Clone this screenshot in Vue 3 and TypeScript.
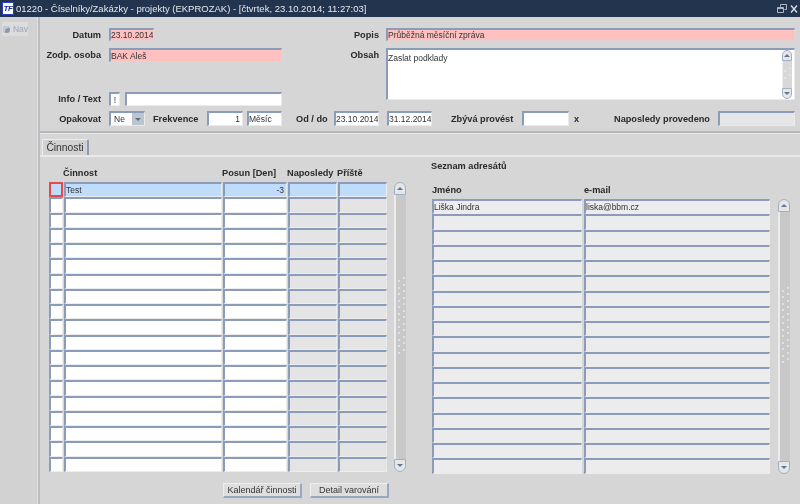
<script setup lang="ts">
const rowsLeft: { name: string; shift: string }[] = Array.from({ length: 19 }, (_, i) =>
  i === 0 ? { name: 'Test', shift: '-3' } : { name: '', shift: '' }
)
const rowsRight: { name: string; mail: string }[] = Array.from({ length: 18 }, (_, i) =>
  i === 0 ? { name: 'Liška Jindra', mail: 'liska@bbm.cz' } : { name: '', mail: '' }
)
const grip: number[] = Array.from({ length: 24 }, (_, i) => i)
const miniGrip: number[] = Array.from({ length: 4 }, (_, i) => i)
</script>

<template>
  <div class="app">
    <header class="titlebar">
      <span class="logo">TF</span>
      <span class="title">01220 - Číselníky/Zakázky - projekty (EKPROZAK) - [čtvrtek, 23.10.2014; 11:27:03]</span>
      <svg class="winbtns" width="24" height="12" viewBox="0 0 24 12" fill="none" stroke="#aeb8c6" stroke-width="1">
        <path d="M4.5 3.5V1.5H10.5V6.5H8.5" />
        <path d="M1.5 4.5H7.5V9.5H1.5Z" />
        <path d="M1.5 5.5H7.5" />
        <path d="M15 2.5L21 9.5M21 2.5L15 9.5" stroke="#d4dae2" stroke-width="1.4" />
      </svg>
    </header>
    <div class="main">
      <aside class="nav">
        <div class="navtab"><span class="navdot"></span><span>Nav</span></div>
      </aside>
      <div class="content">
        <section class="form">
          <div class="upper">
            <div class="ucol-left">
              <div class="frow r1"><label class="lab">Datum</label><div class="inp pink w45">23.10.2014</div></div>
              <div class="frow r2"><label class="lab">Zodp. osoba</label><div class="inp pink w173">BAK Aleš</div></div>
              <div class="frow r3">
                <label class="lab">Info / Text</label>
                <div class="inp w11 center">!</div>
                <div class="inp w157"></div>
              </div>
            </div>
            <div class="ucol-right">
              <div class="frow r1"><label class="lab rlab">Popis</label><div class="inp pink grow">Průběžná měsíční zpráva</div></div>
              <div class="frow r2 obsah">
                <label class="lab rlab">Obsah</label>
                <div class="inp area grow">
                  <span>Zaslat podklady</span>
                  <div class="sb mini">
                    <span class="sbtn up"></span>
                    <span class="track">
                      <span class="grip minigrip"><i v-for="g in miniGrip" :key="g"></i></span>
                    </span>
                    <span class="sbtn down"></span>
                  </div>
                </div>
              </div>
            </div>
          </div>
          <div class="frow r4">
            <label class="lab">Opakovat</label>
            <div class="inp select"><span>Ne</span><i class="caret"><b></b></i></div>
            <label class="blab l-frek">Frekvence</label>
            <div class="inp w36 right">1</div>
            <div class="inp w35 mes">Měsíc</div>
            <label class="blab l-od">Od / do</label>
            <div class="inp w45">23.10.2014</div>
            <div class="inp w45 m8">31.12.2014</div>
            <label class="blab l-zb">Zbývá provést</label>
            <div class="inp w47"></div>
            <label class="blab l-x">x</label>
            <label class="blab l-nap">Naposledy provedeno</label>
            <div class="inp dis w77"></div>
          </div>
        </section>
        <div class="tabs"><div class="tab">Činnosti</div></div>
        <section class="tabbody">
          <div class="tables">
            <div class="left">
              <div class="thead lhead">
                <span class="c-name">Činnost</span>
                <span class="c-shift">Posun [Den]</span>
                <span class="c-last">Naposledy</span>
                <span class="c-next">Příště</span>
              </div>
              <div class="tblwrap">
                <div class="rows">
                  <div v-for="(r, i) in rowsLeft" :key="i" class="row" :class="{ cur: i === 0 }">
                    <div class="cell sel" :class="{ focus: i === 0 }"></div>
                    <div class="cell nm">{{ r.name }}</div>
                    <div class="cell sh">{{ r.shift }}</div>
                    <div class="cell ro la"></div>
                    <div class="cell ro ne"></div>
                  </div>
                </div>
                <div class="sb">
                  <span class="sbtn up"></span>
                  <span class="track">
                    <span class="grip"><i v-for="g in grip" :key="g"></i></span>
                  </span>
                  <span class="sbtn down"></span>
                </div>
              </div>
              <div class="btns">
                <button class="btn">Kalendář činnosti</button>
                <button class="btn">Detail varování</button>
              </div>
            </div>
            <div class="rightp">
              <div class="seznam">Seznam adresátů</div>
              <div class="thead rhead">
                <span class="c-jm">Jméno</span>
                <span>e-mail</span>
              </div>
              <div class="tblwrap rw">
                <div class="rows">
                  <div v-for="(r, i) in rowsRight" :key="i" class="row">
                    <div class="cell gr jm">{{ r.name }}</div>
                    <div class="cell gr em">{{ r.mail }}</div>
                  </div>
                </div>
                <div class="sb">
                  <span class="sbtn up"></span>
                  <span class="track">
                    <span class="grip"><i v-for="g in grip" :key="g"></i></span>
                  </span>
                  <span class="sbtn down"></span>
                </div>
              </div>
            </div>
          </div>
        </section>
      </div>
    </div>
  </div>
</template>

<style>
html, body { margin: 0; padding: 0; background: #d6d6d6; }
</style>

<style scoped>
.app {
  width: 800px; height: 504px; overflow: hidden; display: flex; flex-direction: column;
  background: #d6d6d6; font-family: "Liberation Sans", Arial, sans-serif; font-size: 8.5px; color: #222;
  filter: blur(0.45px);
}
.titlebar {
  height: 17px; flex: none; background: #22344e; color: #e6e9ee; display: flex; align-items: center;
  font-size: 9.5px; padding-left: 2px;
}
.logo {
  width: 10px; height: 11px; background: #fff; border: 1px solid #2a3fc0; color: #1a2ca8; font: italic bold 8px/11px "Liberation Sans", sans-serif;
  text-align: center; margin-right: 2px; letter-spacing: -0.5px;
}
.title { white-space: nowrap; }
.winbtns { margin-left: auto; }
.main { flex: 1; display: flex; min-height: 0; }
.nav {
  width: 38px; flex: none; background: #d2d2d2; border-right: 2px solid #b9bcc0; box-sizing: content-box;
  padding-top: 5px; box-shadow: inset -1px 0 0 #e2e2e2;
}
.navtab {
  margin-left: 2px; width: 26px; height: 14px; background: #dcdcdc; display: flex; align-items: center; gap: 3px;
  color: #9aa7ba; font-size: 8.5px;
}
.navdot { width: 7px; height: 7px; border-radius: 50%; background: #8a98a8; margin-left: 1px; box-shadow: inset 2px 2px 0 #c4ccd4; }
.content { flex: 1; min-width: 0; display: flex; flex-direction: column; }
.form { height: 114px; flex: none; border-bottom: 2px solid #b6b8bb; box-sizing: content-box; box-shadow: 0 1px 0 #e6e6e6; }
.upper { display: flex; padding-top: 11px; height: 83px; box-sizing: content-box; }
.ucol-left { width: 242px; flex: none; display: flex; flex-direction: column; }
.ucol-right { width: 510px; flex: none; margin-left: 3px; display: flex; flex-direction: column; }
.frow { display: flex; align-items: center; }
.lab {
  width: 61px; margin-right: 8px; flex: none; text-align: right; font-weight: bold; font-size: 9.2px; white-space: nowrap; color: #2a2a2a;
}
.rlab { width: 94px; margin-right: 7px; }
.r1 { height: 13px; margin-bottom: 7px; }
.r2 { height: 14px; margin-bottom: 30px; }
.obsah { height: 52px; margin-bottom: 0; align-items: flex-start; }
.obsah .lab { margin-top: 2px; }
.r3 { height: 14px; }
.r4 { height: 15px; }
.inp {
  box-sizing: border-box; height: 100%; background: #fff; border: 1px solid #eaeaea; border-top: 2px solid #8a9cba; border-left: 2px solid #8a9cba;
  padding: 0 1px 0 0; white-space: nowrap; overflow: hidden; line-height: 10px; display: flex; align-items: center; color: #333;
}
.pink { background: #ffc0c0; border-right-color: #e2d2d2; border-bottom-color: #e2d2d2; }
.dis { background: #e6e6e6; }
.grow { flex: 1; min-width: 0; }
.w45 { width: 45px; flex: none; }
.w173 { width: 173px; flex: none; }
.w11 { width: 11px; flex: none; }
.w157 { width: 157px; flex: none; margin-left: 5px; }
.w36 { width: 36px; flex: none; }
.w35 { width: 35px; flex: none; }
.w47 { width: 47px; flex: none; }
.w77 { width: 77px; flex: none; }
.m8 { margin-left: 8px; }
.center { justify-content: center; padding: 0; }
.right { justify-content: flex-end; padding-right: 2px; }
.mes { margin-left: 4px; }
.area { position: relative; align-items: flex-start; padding-top: 3px; height: 52px; }
.select { width: 36px; flex: none; padding: 0 0 0 3px; justify-content: space-between; }
.caret { width: 12px; height: 100%; background: #bcc4cc; display: flex; align-items: center; justify-content: center; }
.caret b { width: 0; height: 0; border: 3px solid transparent; border-top: 3px solid #5a6e8c; border-bottom: 0; }
.blab { font-weight: bold; font-size: 9.2px; white-space: nowrap; flex: none; color: #2a2a2a; }
.l-frek { margin-left: 8px; width: 54px; }
.l-od { margin-left: 14px; width: 38px; }
.l-zb { margin-left: 19px; width: 71px; }
.l-x { margin-left: 5px; width: 40px; }
.l-nap { width: 104px; }
.tabs { height: 16px; flex: none; margin-top: 6px; display: flex; align-items: flex-end; border-bottom: 2px solid #e9e9e9; box-sizing: content-box; }
.tab {
  margin-left: 2px; width: 47px; height: 16px; box-sizing: border-box; background: #d2d2d2; border-top: 1px solid #ececec; border-left: 1px solid #ececec;
  border-right: 2px solid #8b9cb6; display: flex; align-items: center; justify-content: center; font-size: 10.3px; color: #333;
  border-radius: 2px 2px 0 0;
}
.tabbody { flex: 1; min-height: 0; }
.tables { display: flex; padding-left: 9px; }
.left { width: 358px; flex: none; padding-top: 9px; }
.thead {
  font-weight: bold; font-size: 9.2px; height: 13px; margin-bottom: 3px; display: flex; align-items: center; color: #2a2a2a; white-space: nowrap;
}
.c-name { margin-left: 14px; width: 159px; }
.c-shift { width: 65px; }
.c-last { width: 50px; }
.tblwrap { display: flex; }
.row { display: flex; height: 15.25px; box-sizing: border-box; }
.cell {
  box-sizing: border-box; height: 100%; background: #fff; border: 1px solid #ececec; border-top: 2px solid #8a9cba; border-left: 2px solid #8a9cba;
  display: flex; align-items: center; overflow: hidden; white-space: nowrap; color: #333;
}
.sel { width: 14px; margin-right: 1px; }
.nm { width: 158px; margin-right: 1px; }
.sh { width: 64px; margin-right: 1px; justify-content: flex-end; padding-right: 2px; }
.ro { background: #e4e4e4; }
.la { width: 49px; margin-right: 1px; }
.ne { width: 49px; }
.cur .cell { background: #bfdcfb; }
.focus { border: 2px solid #e5484d !important; }
.sb { width: 12px; margin-left: 7px; display: flex; flex-direction: column; flex: none; }
.sbtn {
  height: 13px; flex: none; box-sizing: border-box; border: 1px solid #a2b0c6; background: #e6e6e6; display: flex; align-items: center; justify-content: center;
}
.sbtn::after { content: ""; width: 0; height: 0; border: 3px solid transparent; }
.up { border-radius: 6px 6px 0 0; }
.up::after { border-bottom: 3px solid #5f7496; border-top: 0; }
.down { border-radius: 0 0 6px 6px; }
.down::after { border-top: 3px solid #5f7496; border-bottom: 0; }
.track {
  flex: 1; background: #c8c8c8; border-left: 2px solid #ececec; display: flex; align-items: center; justify-content: center; box-sizing: border-box;
}
.grip { display: grid; grid-template-columns: 2px 2px; column-gap: 3px; row-gap: 4.5px; margin-bottom: 20px; }
.grip i { width: 2px; height: 2px; border-radius: 50%; background: #e4e8ee; }
.grip i:nth-child(even) { transform: translateY(-3px); }
.minigrip { margin-bottom: 0; }
.mini { position: absolute; right: 2px; top: 0; bottom: 0; width: 10px; margin: 0; }
.mini .sbtn { height: 11px; }
.mini .track { border-left-width: 1px; background: #d8d8d8; }
.btns { display: flex; gap: 8px; margin-left: 174px; margin-top: 11px; }
.btn {
  height: 15px; width: 79px; padding: 0; box-sizing: border-box; background: #dedede; border: 1px solid #eee; border-right: 2px solid #98a8c0; border-bottom: 2px solid #98a8c0;
  font: 9px "Liberation Sans", sans-serif; color: #333;
}
.rightp { margin-left: 24px; flex: none; width: 360px; padding-top: 1px; }
.seznam { font-weight: bold; font-size: 9.2px; height: 15px; display: flex; align-items: center; margin-bottom: 10px; color: #2a2a2a; }
.rhead { margin-left: 1px; }
.c-jm { width: 152px; }
.rw { margin-left: 1px; }
.gr { background: #ececec; }
.jm { width: 150px; margin-right: 2px; }
.em { width: 186px; }
.rw .sb { margin-left: 8px; }
</style>
